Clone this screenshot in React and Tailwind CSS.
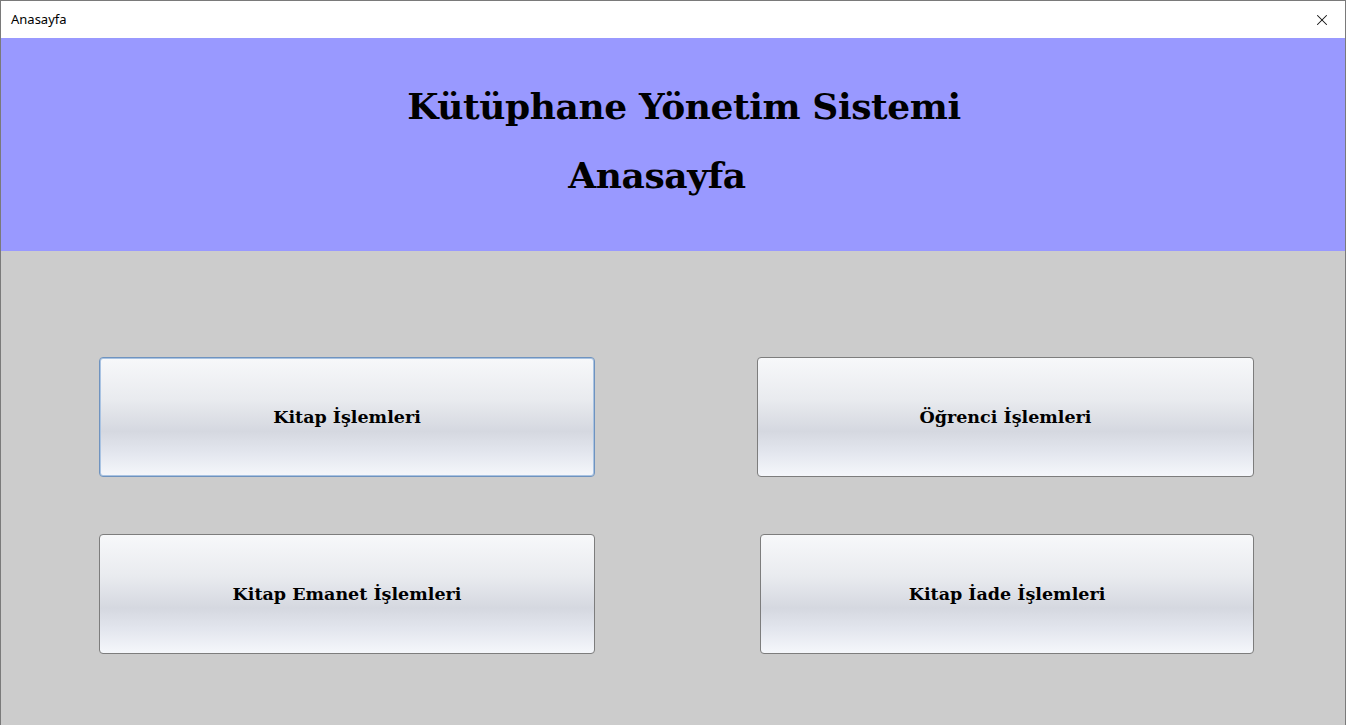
import { X } from 'lucide-react'

const SLAB = { fontFamily: '"DejaVu Serif", "Liberation Serif", serif' }

function MenuButton({ label, focused, className }) {
  return (
    <button
      className={
        'h-[120px] rounded-[4px] border text-[17.5px] font-bold text-black ' +
        'bg-[linear-gradient(to_bottom,#f7f8fa_0%,#e9ebef_35%,#d5d8e0_62%,#e3e6ee_80%,#f5f7fb_100%)] ' +
        (focused
          ? 'border-[#6f93bf] shadow-[inset_0_0_0_1px_#a9c3e2] '
          : 'border-[#7d7d7d] ') +
        (className || '')
      }
      style={SLAB}
    >
      {label}
    </button>
  )
}

export default function App() {
  return (
    <div className="w-[1346px] h-[725px] flex flex-col overflow-hidden border border-[#7a7a7a] border-b-0">
      <div className="h-[37px] bg-white flex items-center justify-between pl-[10px] pr-[14px] shrink-0">
        <span className="text-[13px] text-black" style={{ fontFamily: '"Noto Sans", "Open Sans", sans-serif' }}>
          Anasayfa
        </span>
        <X className="w-[18px] h-[18px] text-[#111]" strokeWidth={1.4} />
      </div>

      <div className="h-[213px] bg-[#9999ff] flex flex-col items-center shrink-0 pt-[50px]">
        <h1 className="text-[36px] font-bold leading-none text-black pl-[22px] tracking-[-0.4px]" style={SLAB}>
          Kütüphane Yönetim Sistemi
        </h1>
        <h2 className="text-[36px] font-bold leading-none text-black mt-[33px] pr-[32px] tracking-[-0.4px]" style={SLAB}>
          Anasayfa
        </h2>
      </div>

      <div className="flex-1 bg-[#cccccc] pt-[106px] pl-[98px]">
        <div className="grid grid-cols-[496px_497px] gap-x-[162px] gap-y-[57px]">
          <MenuButton label="Kitap İşlemleri" focused />
          <MenuButton label="Öğrenci İşlemleri" />
          <MenuButton label="Kitap Emanet İşlemleri" />
          <MenuButton label="Kitap İade İşlemleri" className="ml-[3px]" />
        </div>
      </div>
    </div>
  )
}
